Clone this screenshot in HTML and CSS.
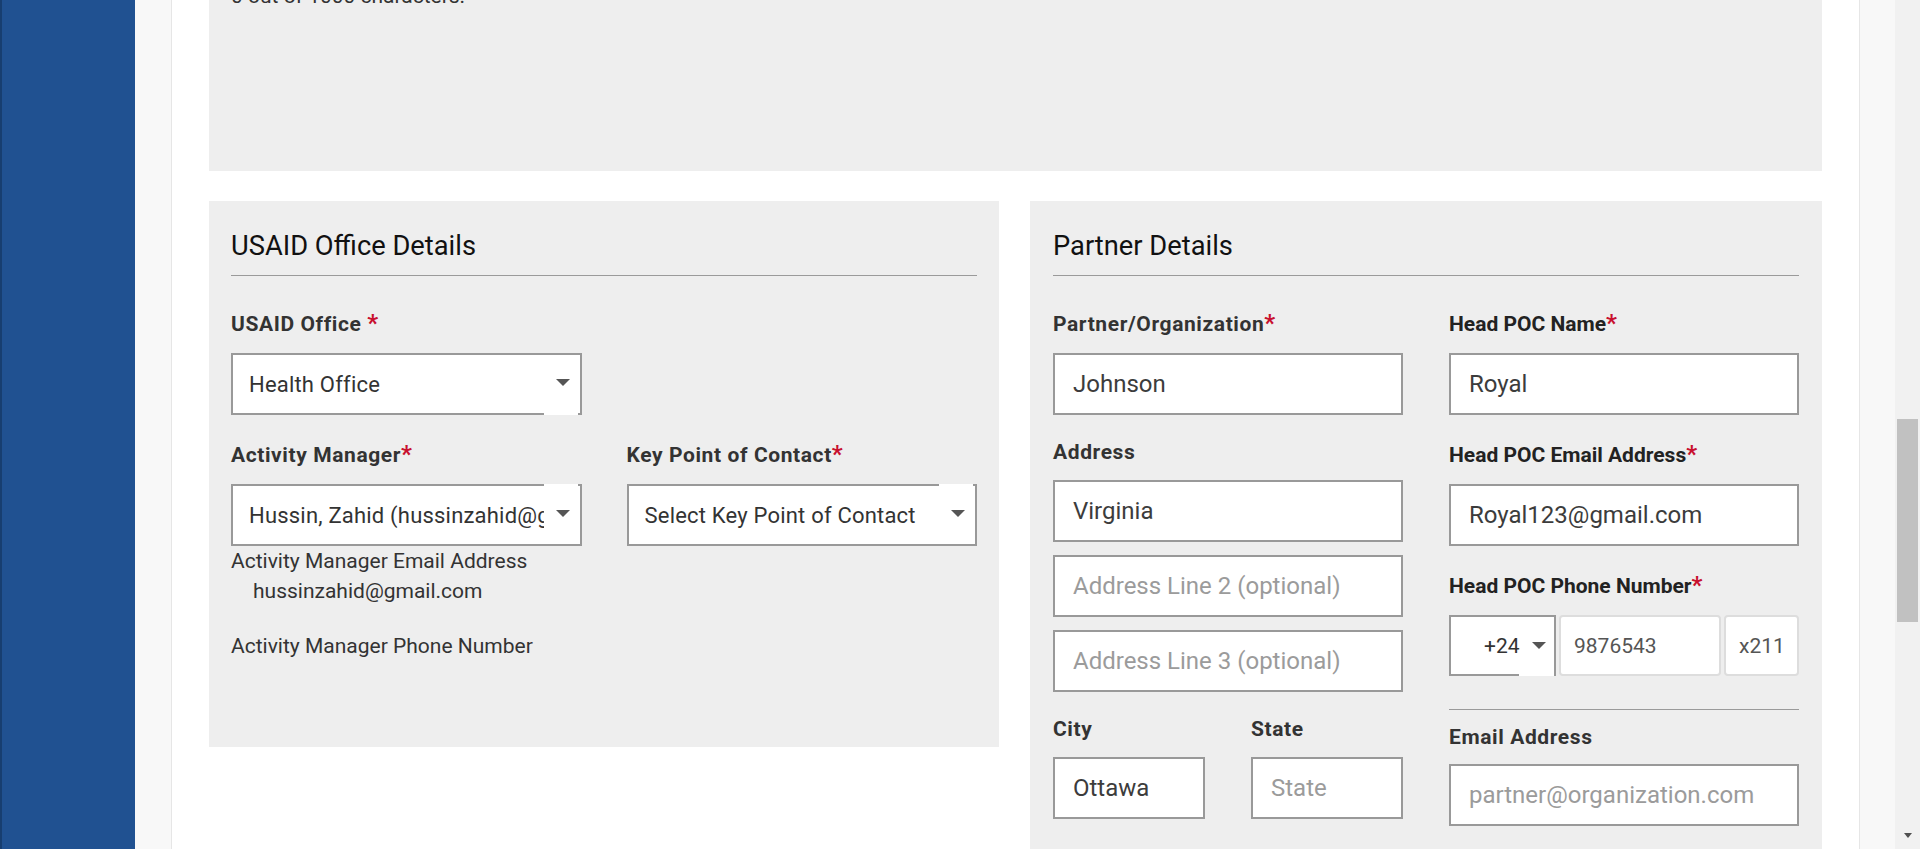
FILE: index.html
```html
<!DOCTYPE html>
<html lang="en">
<head>
<meta charset="utf-8">
<title>Activity Details</title>
<link rel="stylesheet" href="styles.css">
</head>
<body>
<div class="app">
  <nav class="sidebar"></nav>
  <div class="gutter gutter-left"></div>
  <main class="content">
    <section class="panel panel-top">
      <p class="charcount">0 out of 1000 characters.</p>
    </section>

    <div class="panel-row">
      <section class="panel panel-usaid">
        <h2 class="panel-title">USAID Office Details</h2>
        <div class="grid2">
          <div class="field">
            <label class="lbl">USAID Office <span class="req">*</span></label>
            <div class="select glitch-bottom"><span class="select-text">Health Office</span><span class="caret"></span></div>
          </div>
          <div></div>

          <div>
            <div class="field field-tight">
              <label class="lbl">Activity Manager<span class="req">*</span></label>
              <div class="select glitch-top"><span class="select-text">Hussin, Zahid (hussinzahid@gmail.com)</span><span class="caret"></span></div>
            </div>
            <div class="info-label">Activity Manager Email Address</div>
            <div class="info-value">hussinzahid@gmail.com</div>
            <div class="info-label">Activity Manager Phone Number</div>
            <div class="info-value"></div>
          </div>
          <div class="field">
            <label class="lbl">Key Point of Contact<span class="req">*</span></label>
            <div class="select glitch-top"><span class="select-text">Select Key Point of Contact</span><span class="caret"></span></div>
          </div>
        </div>
      </section>

      <section class="panel panel-partner">
        <h2 class="panel-title">Partner Details</h2>
        <div class="grid2">
          <div class="col">
            <div class="field">
              <label class="lbl">Partner/Organization<span class="req">*</span></label>
              <input class="input" type="text" value="Johnson">
            </div>
            <div class="field">
              <label class="lbl">Address</label>
              <div class="stack">
                <input class="input" type="text" value="Virginia">
                <input class="input" type="text" placeholder="Address Line 2 (optional)">
                <input class="input" type="text" placeholder="Address Line 3 (optional)">
              </div>
            </div>
            <div class="grid2 grid2-sub">
              <div class="field">
                <label class="lbl">City</label>
                <input class="input" type="text" value="Ottawa">
              </div>
              <div class="field">
                <label class="lbl">State</label>
                <input class="input" type="text" placeholder="State">
              </div>
            </div>
          </div>

          <div class="col">
            <div class="field">
              <label class="lbl lbl-dark">Head POC Name<span class="req">*</span></label>
              <input class="input" type="text" value="Royal">
            </div>
            <div class="field">
              <label class="lbl lbl-dark">Head POC Email Address<span class="req">*</span></label>
              <input class="input" type="text" value="Royal123@gmail.com">
            </div>
            <div class="field field-phone">
              <label class="lbl lbl-dark">Head POC Phone Number<span class="req">*</span></label>
              <div class="phone-row">
                <div class="phone-code glitch-bottom"><span class="select-text">+24</span><span class="caret"></span></div>
                <input class="phone-input phone-number" type="text" value="9876543">
                <input class="phone-input phone-ext" type="text" value="x211">
              </div>
            </div>
            <hr class="divider">
            <div class="field">
              <label class="lbl lbl-close">Email Address</label>
              <input class="input" type="text" placeholder="partner@organization.com">
            </div>
          </div>
        </div>
      </section>
    </div>
  </main>
  <div class="gutter gutter-right"></div>
  <div class="scrollbar">
    <div class="sb-thumb"></div>
    <span class="sb-down"></span>
  </div>
</div>
</body>
</html>
```

FILE: styles.css
```css
* { box-sizing: border-box; }

html, body {
  margin: 0;
  padding: 0;
  height: 100%;
  overflow: hidden;
  background: #ffffff;
  font-family: Roboto, "Liberation Sans", Arial, sans-serif;
  color: #333333;
}

.app {
  display: flex;
  width: 1920px;
  height: 849px;
  overflow: hidden;
}

.sidebar {
  flex: 0 0 135px;
  background: #205191;
  border-left: 2px solid #173e70;
}

.gutter {
  flex: 0 0 36px;
  background: #f8f8f8;
}
.gutter-left { border-right: 1px solid #e6e6e6; flex-basis: 37px; }
.gutter-right { border-left: 1px solid #e6e6e6; }

.content {
  flex: 0 0 1687px;
  min-width: 0;
  padding: 0 37px;
  background: #ffffff;
}

.panel {
  background: #eeeeee;
  min-width: 0;
}

.panel-top {
  margin-top: -19px;
  height: 190px;
  padding: 0 22px;
}

.charcount {
  margin: 0;
  font-size: 21px;
  line-height: 30px;
  color: #333333;
}

.panel-row {
  margin-top: 30px;
  display: grid;
  grid-template-columns: 790px 792px;
  column-gap: 31px;
  align-items: start;
}

.panel-usaid {
  padding: 29px 22px 31px;
}

.panel-partner {
  padding: 29px 23px 40px;
}

.panel-title {
  margin: 0 0 33px;
  font-size: 27.3px;
  font-weight: 400;
  line-height: 32px;
  color: #111111;
  padding-bottom: 13px;
  border-bottom: 1px solid #9a9a9a;
}

.grid2 {
  display: grid;
  grid-template-columns: minmax(0, 1fr) minmax(0, 1fr);
  column-gap: 45px;
  align-items: start;
}

.panel-partner .grid2 { column-gap: 46px; }

.col { min-width: 0; }

.field { margin-bottom: 25px; min-width: 0; }
.field-tight { margin-bottom: 0; }
.field-phone { margin-bottom: 33px; }

.lbl {
  display: block;
  font-size: 21px;
  font-weight: 700;
  letter-spacing: 0.6px;
  line-height: normal;
  color: #333333;
  margin-bottom: 16px;
}
.lbl-dark { color: #222222; letter-spacing: 0; }
.lbl-close { margin-bottom: 15px; }

.req {
  color: #c8102e;
  font-size: 24px;
  letter-spacing: 0;
  line-height: normal;
}

.select,
.phone-code {
  position: relative;
  display: flex;
  align-items: center;
  height: 62px;
  border: 2px solid #999999;
  background: #ffffff;
  padding: 0 36px 0 16px;
  font-size: 22px;
  letter-spacing: 0.2px;
  color: #333333;
}

.select-text {
  flex: 1;
  min-width: 0;
  overflow: hidden;
  white-space: nowrap;
}

.caret {
  position: absolute;
  right: 10px;
  top: 50%;
  margin-top: -5px;
  width: 0;
  height: 0;
  border-left: 7px solid transparent;
  border-right: 7px solid transparent;
  border-top: 7px solid #555555;
}

.glitch-top::after,
.glitch-bottom::after {
  content: "";
  position: absolute;
  right: 2px;
  width: 34px;
  height: 2px;
  background: #ffffff;
}
.glitch-top::after { top: -2px; }
.glitch-bottom::after { bottom: -2px; }

.input {
  display: block;
  width: 100%;
  min-width: 0;
  height: 62px;
  border: 2px solid #999999;
  border-radius: 0;
  background: #ffffff;
  padding: 0 18px;
  font-family: Roboto, "Liberation Sans", Arial, sans-serif;
  font-size: 24px;
  color: #3c3c3c;
  outline: none;
}
.input::placeholder { color: #9b9b9b; opacity: 1; }

.stack {
  display: flex;
  flex-direction: column;
  gap: 13px;
}

.phone-row {
  display: flex;
  gap: 3px;
}

.phone-code {
  flex: 0 0 107px;
  height: 61px;
  padding: 0 30px 0 33px;
  font-size: 21px;
  letter-spacing: 0;
}
.phone-code .caret { right: 8px; margin-top: -4px; }
.phone-code.glitch-bottom::after { width: 35px; right: 0; }

.phone-input {
  display: block;
  height: 61px;
  border: 2px solid #dddddd;
  border-radius: 4px;
  background: #ffffff;
  padding: 0 13px;
  font-family: Roboto, "Liberation Sans", Arial, sans-serif;
  font-size: 21px;
  color: #555555;
  outline: none;
  min-width: 0;
}
.phone-number { flex: 0 0 162px; }
.phone-ext { flex: 0 0 75px; }

.divider {
  margin: 0 0 15px;
  border: 0;
  border-top: 1px solid #9a9a9a;
  height: 0;
}

.info-label,
.info-value {
  font-size: 21px;
  line-height: 30px;
  color: #333333;
}
.info-value {
  padding-left: 22px;
  min-height: 30px;
  margin-bottom: 25px;
}

.scrollbar {
  flex: 0 0 25px;
  background: #f1f1f1;
  display: flex;
  flex-direction: column;
  align-items: center;
}

.sb-thumb {
  margin-top: 419px;
  width: 21px;
  height: 203px;
  background: #c1c1c1;
}

.sb-down {
  margin-top: auto;
  margin-bottom: 11px;
  width: 0;
  height: 0;
  border-left: 4px solid transparent;
  border-right: 4px solid transparent;
  border-top: 5px solid #505050;
}
```
